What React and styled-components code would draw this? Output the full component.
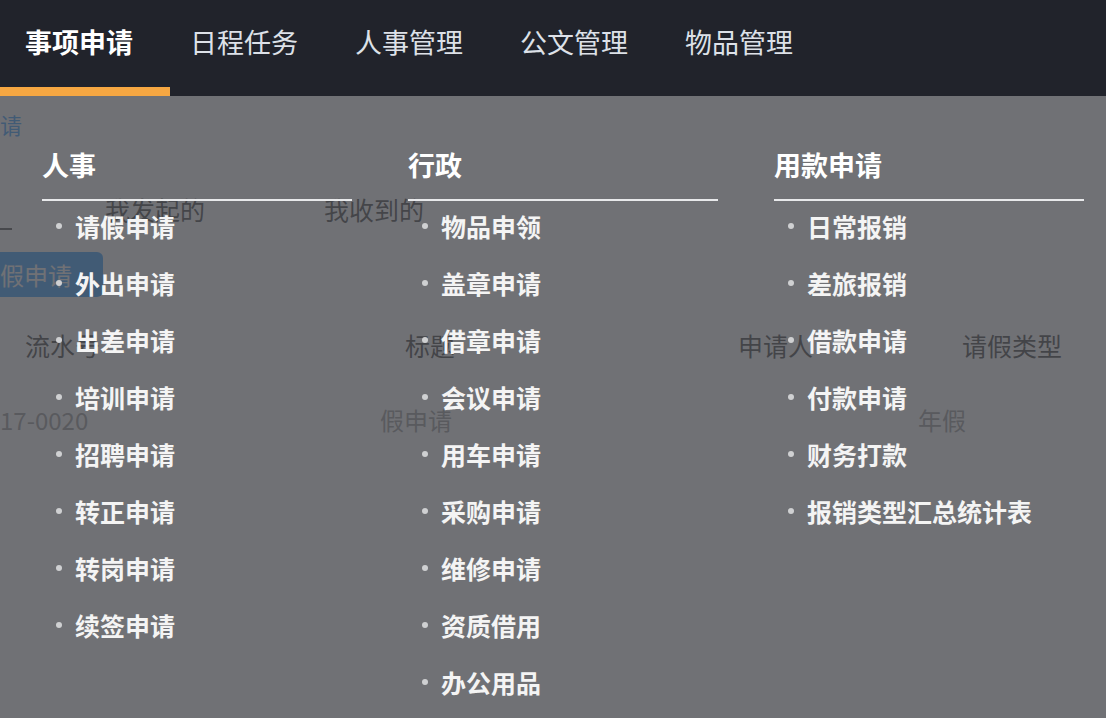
import React from 'react'
import styled, { createGlobalStyle } from 'styled-components'

const GlobalStyle = createGlobalStyle`
  html, body {
    margin: 0;
    padding: 0;
  }
  body {
    font-family: "Noto Sans CJK SC", "Noto Sans", sans-serif;
    background: #fff;
  }
`

const tabs = ['事项申请', '日程任务', '人事管理', '公文管理', '物品管理']

const groups = [
  {
    title: '人事',
    items: ['请假申请', '外出申请', '出差申请', '培训申请', '招聘申请', '转正申请', '转岗申请', '续签申请'],
  },
  {
    title: '行政',
    items: ['物品申领', '盖章申请', '借章申请', '会议申请', '用车申请', '采购申请', '维修申请', '资质借用', '办公用品'],
  },
  {
    title: '用款申请',
    items: ['日常报销', '差旅报销', '借款申请', '付款申请', '财务打款', '报销类型汇总统计表'],
  },
]

const Shell = styled.div`
  position: relative;
  height: 100vh;
  overflow: hidden;
  background: #fff;
`

/* top navigation */
const NavBar = styled.nav`
  display: flex;
  height: 96px;
  background: #21232b;
`

const NavTab = styled.div`
  position: relative;
  padding: 0 32px 0 25px;
  line-height: 84px;
  font-size: 27px;
  font-weight: ${p => (p.$active ? 700 : 400)};
  color: ${p => (p.$active ? '#ffffff' : '#dde1e8')};
  white-space: nowrap;
  cursor: pointer;

  &::after {
    content: '';
    display: ${p => (p.$active ? 'block' : 'none')};
    position: absolute;
    left: 0;
    bottom: 0;
    width: 170px;
    height: 9px;
    background: #f6a742;
  }
`

/* page behind the dropdown */
const Page = styled.main`
  display: flex;
  flex-direction: column;
  color: #262626;
`

const Crumb = styled.div`
  margin-top: 13px;
  font-size: 22px;
  line-height: 30px;
  color: #1890ff;
`

const SubTabs = styled.div`
  display: flex;
  align-items: center;
  height: 42px;
  margin-top: 49px;
  font-size: 25px;
`

const TabInk = styled.span`
  align-self: flex-end;
  width: 12px;
  height: 2px;
  background: #333;
`

const SubTab = styled.span`
  margin-left: ${p => p.$offset}px;
`

const Tag = styled.div`
  align-self: flex-start;
  margin-top: 22px;
  height: 45px;
  padding-right: 31px;
  border-radius: 0 6px 6px 0;
  background: #1890ff;
  color: #fff;
  font-size: 24px;
  line-height: 45px;
`

const TableRow = styled.div`
  display: grid;
  grid-template-columns: 380px 358px 180px 1fr;
  align-items: center;
  height: 75px;
  margin-top: ${p => (p.$first ? '10px' : '0')};
  font-size: ${p => (p.$head ? '25px' : '24px')};
  color: ${p => (p.$head ? '#222' : '#8c8c8c')};
`

const Cell = styled.span`
  padding-left: ${p => p.$indent || 0}px;
  white-space: nowrap;
`

/* mega menu */
const Dropdown = styled.div`
  position: absolute;
  top: 96px;
  left: 0;
  right: 0;
  bottom: 0;
  display: grid;
  grid-template-columns: repeat(3, 310px);
  column-gap: 56px;
  align-content: start;
  padding: 51px 0 0 42px;
  background: rgba(76, 78, 83, 0.8);
`

const Group = styled.section`
  display: flex;
  flex-direction: column;
`

const GroupTitle = styled.h3`
  margin: 0;
  padding-bottom: 16px;
  border-bottom: 2px solid #e8e9eb;
  font-size: 27px;
  line-height: 36px;
  font-weight: 700;
  color: #fff;
`

const ItemList = styled.ul`
  margin: -4px 0 0;
  padding: 0;
  list-style: none;
`

const Item = styled.li`
  display: flex;
  align-items: center;
  height: 57px;
  font-size: 25px;
  font-weight: 700;
  color: #f4f4f4;
  white-space: nowrap;
  cursor: pointer;

  &::before {
    content: '';
    width: 6px;
    height: 6px;
    margin: 0 13px 0 14px;
    border-radius: 50%;
    background: #cfd0d2;
  }
`

export default function App() {
  return (
    <Shell>
      <GlobalStyle />
      <NavBar>
        {tabs.map((t, i) => (
          <NavTab key={t} $active={i === 0}>{t}</NavTab>
        ))}
      </NavBar>

      <Page>
        <Crumb>请</Crumb>
        <SubTabs>
          <TabInk />
          <SubTab $offset={93}>我发起的</SubTab>
          <SubTab $offset={119}>我收到的</SubTab>
        </SubTabs>
        <Tag>假申请</Tag>
        <TableRow $head $first>
          <Cell $indent={25}>流水号</Cell>
          <Cell $indent={25}>标题</Cell>
          <Cell>申请人</Cell>
          <Cell $indent={44}>请假类型</Cell>
        </TableRow>
        <TableRow>
          <Cell>17-0020</Cell>
          <Cell>假申请</Cell>
          <Cell />
          <Cell>年假</Cell>
        </TableRow>
      </Page>

      <Dropdown>
        {groups.map(g => (
          <Group key={g.title}>
            <GroupTitle>{g.title}</GroupTitle>
            <ItemList>
              {g.items.map(it => (
                <Item key={it}>{it}</Item>
              ))}
            </ItemList>
          </Group>
        ))}
      </Dropdown>
    </Shell>
  )
}
